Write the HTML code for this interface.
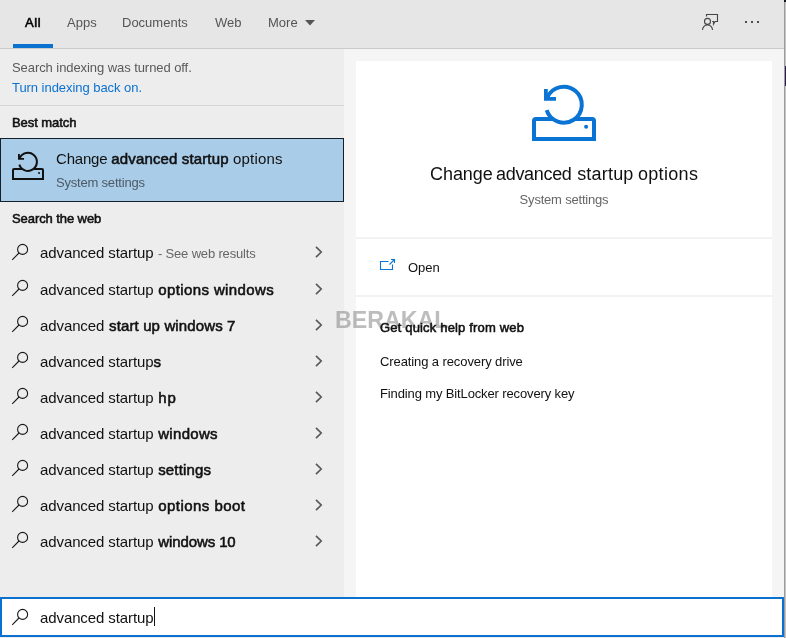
<!DOCTYPE html>
<html><head><meta charset="utf-8">
<style>
*{margin:0;padding:0;box-sizing:border-box}
html,body{width:786px;height:638px;overflow:hidden;background:#ededed}
body{position:relative;font-family:"Liberation Sans",sans-serif;color:#111;font-size:15px}
.abs{position:absolute;white-space:nowrap}
.tx{will-change:transform}
#top{left:0;top:0;width:784px;height:48px;background:#e6e6e6}
#topline{left:0;top:48px;width:784px;height:1px;background:#cbcbcb}
#left{left:0;top:49px;width:344px;height:548px;background:#ededed}
#right{left:344px;top:49px;width:440px;height:548px;background:#f5f5f5}
#card{left:356px;top:61px;width:416px;height:536px;background:#fff}
#edge1{left:784px;top:0;width:1px;height:638px;background:#9c9c9c}
#edge2{left:785px;top:0;width:1px;height:638px;background:#c6c6c6}
.tab{top:15px;font-size:13px;color:#555;line-height:16px}
#sel{left:0;top:138px;width:344px;height:64px;background:#a9cce8;border:1px solid #16202a}
.t13{font-size:13px;line-height:16px}
b,.b{font-weight:normal;-webkit-text-stroke:0.55px currentColor}
.row{left:40px;font-size:15px;line-height:18px;color:#111;letter-spacing:-0.1px}
.row b{letter-spacing:-0.36px;margin-left:.7px}
svg{position:absolute;overflow:visible}
#sbox{left:0;top:597px;width:784px;height:40px;background:#fff;border:2px solid #0b71d1}
</style></head><body><div id="wrap" style="position:absolute;left:0;top:0;width:786px;height:638px;will-change:transform">
<svg width="0" height="0" style="display:none">
 <defs>
  <symbol id="mag" viewBox="0 0 18 18" overflow="visible">
   <circle cx="11.6" cy="6.4" r="5" fill="none" stroke="#1a1a1a" stroke-width="1.1"/>
   <path d="M8 10L1.2 16.8" stroke="#1a1a1a" stroke-width="1.1" fill="none"/>
  </symbol>
  <symbol id="chev" viewBox="0 0 8 12" overflow="visible">
   <path d="M1 0.8L6.2 6L1 11.2" fill="none" stroke="#5a5a5a" stroke-width="1.7"/>
  </symbol>
  <symbol id="drive" viewBox="0 0 64 58" overflow="visible">
   <path d="M21 35H4a2 2 0 0 0-2 2V55H62V37a2 2 0 0 0-2-2H43" fill="none" stroke="currentColor" stroke-width="4"/>
   <path d="M14.65 26.17A18 18 0 1 0 15.49 13.09" fill="none" stroke="currentColor" stroke-width="4"/>
   <path d="M12 5h3.8v7.9H24v3.8H12z" fill="currentColor"/>
   <circle cx="54.1" cy="42.8" r="2" fill="currentColor"/>
  </symbol>
 </defs>
</svg>
<div class="abs" id="top"></div>
<div class="abs" id="topline"></div>
<div class="abs" id="left"></div>
<div class="abs" id="right"></div>
<div class="abs" id="card"></div>
<div class="abs" id="edge1"></div>
<div class="abs" id="edge2"></div>
<div class="abs" style="left:784px;top:0;width:2px;height:2px;background:#10161a"></div>
<div class="abs" style="left:785px;top:66px;width:1px;height:20px;background:#2b1b52"></div>
<div class="abs" style="left:335px;top:306.5px;font-size:23.2px;line-height:26px;font-weight:bold;color:rgba(128,128,128,.52)">BERAKAL</div>

<div class="abs tab b" style="left:25px;color:#000;letter-spacing:0.55px">All</div>
<div class="abs" style="left:13px;top:44px;width:40px;height:4px;background:#0b71d1"></div>
<div class="abs tab" style="left:67px">Apps</div>
<div class="abs tab" style="left:122px">Documents</div>
<div class="abs tab" style="left:215px">Web</div>
<div class="abs tab" style="left:268px">More</div>
<svg style="left:305px;top:20px" width="10" height="6"><path d="M0 0h10l-5 5.5z" fill="#555"/></svg>

<!-- feedback icon -->
<svg style="left:696px;top:8px" width="30" height="28" viewBox="696 8 30 28">
 <g fill="none" stroke="#444" stroke-width="1.1">
  <circle cx="707.5" cy="21.4" r="3"/>
  <path d="M702.5 29.9a5 5 0 0 1 10 0"/>
  <path d="M706.5 16.6V14.5H717.5V21.5H715L713.5 24.2V21.5H712.2"/>
 </g>
</svg>
<div class="abs" style="left:745px;top:21px;width:2px;height:2px;background:#4d4d4d"></div>
<div class="abs" style="left:751px;top:21px;width:2px;height:2px;background:#4d4d4d"></div>
<div class="abs" style="left:757px;top:21px;width:2px;height:2px;background:#4d4d4d"></div>

<div class="abs t13" style="left:12px;top:60px;color:#5a5a5a;letter-spacing:-0.07px">Search indexing was turned off.</div>
<div class="abs t13" style="left:12px;top:80px;color:#0b71d1;letter-spacing:-0.05px">Turn indexing back on.</div>
<div class="abs" style="left:0;top:105px;width:344px;height:1px;background:#d6d6d6"></div>
<div class="abs t13 b" style="left:12px;top:115px;letter-spacing:-0.06px">Best match</div>

<div class="abs" id="sel"></div>
<svg style="left:12px;top:151px;color:#111" width="32" height="30"><use href="#drive" y="0.5" width="32" height="29"/></svg>
<div class="abs" id="stitle" style="left:56px;top:150px;font-size:15px;line-height:18px"><span style="letter-spacing:-0.2px">Change </span><b style="letter-spacing:0.14px">advanced startup</b><span style="letter-spacing:0.2px"> options</span></div>
<div class="abs t13" style="left:56px;top:175px;color:#4d5965;letter-spacing:-0.2px">System settings</div>

<div class="abs t13 b" style="left:12px;top:211px;letter-spacing:-0.08px">Search the web</div>

<svg style="left:11px;top:243px" width="18" height="18"><use href="#mag"/></svg>
<svg style="left:315px;top:246px" width="8" height="12"><use href="#chev"/></svg>
<div class="abs row" style="top:244px">advanced startup <span class="t13" style="color:#666;letter-spacing:-0.165px;margin-left:.4px">- See web results</span></div>
<svg style="left:11px;top:279px" width="18" height="18"><use href="#mag"/></svg>
<svg style="left:315px;top:283px" width="8" height="12"><use href="#chev"/></svg>
<div class="abs row" style="top:281px">advanced startup <b style="letter-spacing:0.39px">options windows</b></div>
<svg style="left:11px;top:315px" width="18" height="18"><use href="#mag"/></svg>
<svg style="left:315px;top:319px" width="8" height="12"><use href="#chev"/></svg>
<div class="abs row" style="top:317px">advanced <b style="letter-spacing:0.13px">start up windows 7</b></div>
<svg style="left:11px;top:351px" width="18" height="18"><use href="#mag"/></svg>
<svg style="left:315px;top:355px" width="8" height="12"><use href="#chev"/></svg>
<div class="abs row" style="top:353px">advanced startup<b style="margin-left:0px;letter-spacing:0">s</b></div>
<svg style="left:11px;top:387px" width="18" height="18"><use href="#mag"/></svg>
<svg style="left:315px;top:391px" width="8" height="12"><use href="#chev"/></svg>
<div class="abs row" style="top:389px">advanced startup <b style="letter-spacing:0.8px">hp</b></div>
<svg style="left:11px;top:423px" width="18" height="18"><use href="#mag"/></svg>
<svg style="left:315px;top:427px" width="8" height="12"><use href="#chev"/></svg>
<div class="abs row" style="top:425px">advanced startup <b style="letter-spacing:0.3px">windows</b></div>
<svg style="left:11px;top:459px" width="18" height="18"><use href="#mag"/></svg>
<svg style="left:315px;top:463px" width="8" height="12"><use href="#chev"/></svg>
<div class="abs row" style="top:461px">advanced startup <b style="letter-spacing:0.14px">settings</b></div>
<svg style="left:11px;top:495px" width="18" height="18"><use href="#mag"/></svg>
<svg style="left:315px;top:499px" width="8" height="12"><use href="#chev"/></svg>
<div class="abs row" style="top:497px">advanced startup <b style="letter-spacing:0.46px">options boot</b></div>
<svg style="left:11px;top:531px" width="18" height="18"><use href="#mag"/></svg>
<svg style="left:315px;top:535px" width="8" height="12"><use href="#chev"/></svg>
<div class="abs row" style="top:533px">advanced startup <b style="letter-spacing:-0.1px">windows 10</b></div>

<div class="abs" id="sbox"></div>
<svg style="left:11px;top:608px" width="18" height="18"><use href="#mag"/></svg>
<div class="abs row" style="top:609px">advanced startup</div>
<div class="abs" style="left:154px;top:607px;width:1px;height:19px;background:#111"></div>

<svg style="left:532px;top:84px;color:#0a74d4" width="64" height="58"><use href="#drive"/></svg>
<div class="abs" id="rtitle" style="left:430px;top:163px;font-size:18px;line-height:22px;letter-spacing:-0.05px"><span>Change</span><span style="letter-spacing:-0.321px;margin-left:-1.43px"> advanced</span><span style="letter-spacing:0.2px;margin-left:0.42px"> startup</span><span style="letter-spacing:0.333px;margin-left:-1.03px"> options</span></div>
<div class="abs t13" style="left:356px;top:192px;width:416px;text-align:center;color:#666;letter-spacing:-0.2px">System settings</div>
<div class="abs" style="left:356px;top:237px;width:416px;height:2px;background:#f2f2f2"></div>
<div class="abs" style="left:356px;top:295px;width:416px;height:2px;background:#f2f2f2"></div>
<svg style="left:379px;top:257px" width="18" height="15" viewBox="379 257 18 15">
 <g fill="none" stroke="#0a74d4" stroke-width="1.1">
  <path d="M388.5 261.5H380.5V269.5H392.5V264.5"/>
  <path d="M389.5 264.5L394.5 259.5M391 259.5H394.5V263"/>
 </g>
</svg>
<div class="abs t13" style="left:408px;top:260px">Open</div>
<div class="abs t13 b" style="left:380px;top:320px;letter-spacing:0.17px">Get quick help from web</div>
<div class="abs t13" style="left:380px;top:354px;letter-spacing:-0.1px">Creating a recovery drive</div>
<div class="abs t13" style="left:380px;top:386px;letter-spacing:-0.13px">Finding my BitLocker recovery key</div>
</div></body></html>
